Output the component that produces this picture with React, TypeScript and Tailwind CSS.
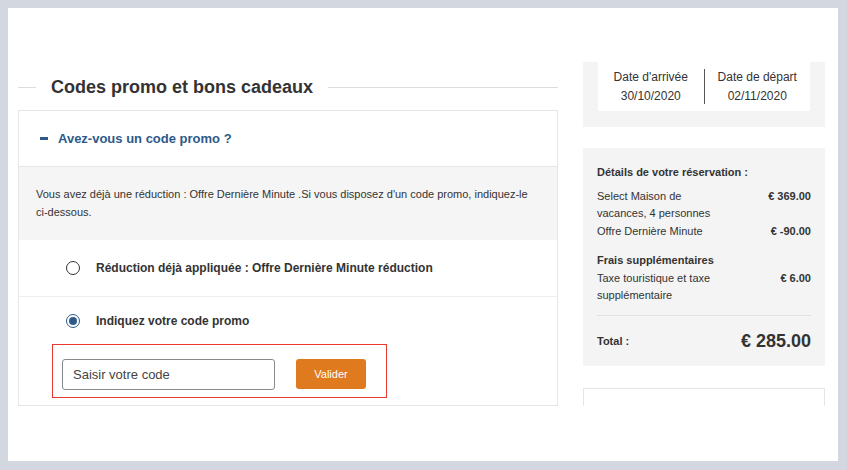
import { useState } from "react";

const sans = "font-['Liberation_Sans',Arial,sans-serif]";

function Radio({ checked }: { checked?: boolean }) {
  return (
    <span
      className={`flex h-[14px] w-[14px] shrink-0 items-center justify-center rounded-full border-[1.5px] ${
        checked ? "border-[#2d5a8a]" : "border-[#333]"
      }`}
    >
      {checked && <span className="h-[8px] w-[8px] rounded-full bg-[#2d5a8a]" />}
    </span>
  );
}

function PriceRow({ label, value }: { label: string; value: string }) {
  return (
    <div className="flex items-start justify-between gap-4">
      <span className="w-[130px]">{label}</span>
      <span className="font-bold">{value}</span>
    </div>
  );
}

export default function App() {
  const [code, setCode] = useState("");

  return (
    <div className={`h-[470px] w-[847px] bg-[#d3d7df] pt-2 pl-2 ${sans}`}>
      <div className="flex h-[453px] w-[830px] items-start gap-[25px] overflow-hidden bg-white pl-[10px]">
        {/* ---- left column ---- */}
        <div className="w-[540px] pt-[56px]">
          <div className="flex h-[46px] items-center">
            <span className="h-px w-[18px] bg-[#ddd]" />
            <h2 className="px-[15px] text-[18px] font-bold text-[#333]">
              Codes promo et bons cadeaux
            </h2>
            <span className="h-px flex-1 bg-[#ddd]" />
          </div>

          <div className="border border-[#e6e6e6]">
            <div className="flex h-[56px] items-center gap-[10px] border-b border-[#e6e6e6] pl-[21px]">
              <span className="h-[3px] w-[8px] bg-[#2d5a8a]" />
              <span className="text-[13px] font-bold text-[#2d5a8a]">
                Avez-vous un code promo ?
              </span>
            </div>

            <div className="bg-[#f5f5f5] px-[17px] pt-[18px] pb-[19px] text-[11px] leading-[18px] text-[#333]">
              Vous avez déjà une réduction : Offre Dernière Minute .Si vous disposez d'un code promo,
              indiquez-le ci-dessous.
            </div>

            <div className="flex h-[57px] items-center gap-[16px] border-b border-[#eee] pl-[47px] text-[12px] font-bold text-[#333]">
              <Radio />
              Réduction déjà appliquée : Offre Dernière Minute réduction
            </div>

            <div className="pt-[15px] pb-[7px]">
              <div className="flex items-center gap-[16px] pl-[47px] text-[12px] font-bold text-[#333]">
                <Radio checked />
                Indiquez votre code promo
              </div>
              <div className="mt-[14px] ml-[33px] flex w-[335px] items-start gap-[21px] border border-[#e8392e] px-[9px] pt-[14px] pb-[7px]">
                <input
                  value={code}
                  onChange={(e) => setCode(e.target.value)}
                  placeholder="Saisir votre code"
                  className="h-[31px] w-[213px] rounded-[3px] border border-[#8a8a8a] px-[10px] text-[13px] text-[#333] outline-none placeholder:text-[#444]"
                />
                <button className="h-[30px] w-[70px] rounded-[3px] bg-[#e07a1f] text-[11px] text-white">
                  Valider
                </button>
              </div>
            </div>
          </div>
        </div>

        {/* ---- right column ---- */}
        <div className="w-[242px] pt-[54px] text-[#333]">
          <div className="bg-[#f4f4f4] px-[15px] pb-[16px]">
            <div className="flex h-[49px] items-center bg-white text-[12px] leading-[19px]">
              <div className="flex-1 text-center">
                <div>Date d'arrivée</div>
                <div>30/10/2020</div>
              </div>
              <span className="h-[35px] w-px bg-[#555]" />
              <div className="flex-1 text-center">
                <div>Date de départ</div>
                <div>02/11/2020</div>
              </div>
            </div>
          </div>

          <div className="mt-[21px] bg-[#f4f4f4] px-[14px] pt-[16px] text-[11px] leading-[17.5px]">
            <div className="font-bold">Détails de votre réservation :</div>
            <div className="mt-[6px]">
              <PriceRow label="Select Maison de vacances, 4 personnes" value="€ 369.00" />
              <PriceRow label="Offre Dernière Minute" value="€ -90.00" />
            </div>
            <div className="mt-[12px] font-bold">Frais supplémentaires</div>
            <PriceRow label="Taxe touristique et taxe supplémentaire" value="€ 6.00" />
            <div className="mt-[10px] flex h-[51px] items-center justify-between border-t border-[#e2e2e2] pt-[3px]">
              <span className="font-bold">Total :</span>
              <span className="text-[18px] font-bold">€ 285.00</span>
            </div>
          </div>

          <div className="mt-[22px] h-[18px] border border-b-0 border-[#e6e6e6]" />
        </div>
      </div>
    </div>
  );
}
